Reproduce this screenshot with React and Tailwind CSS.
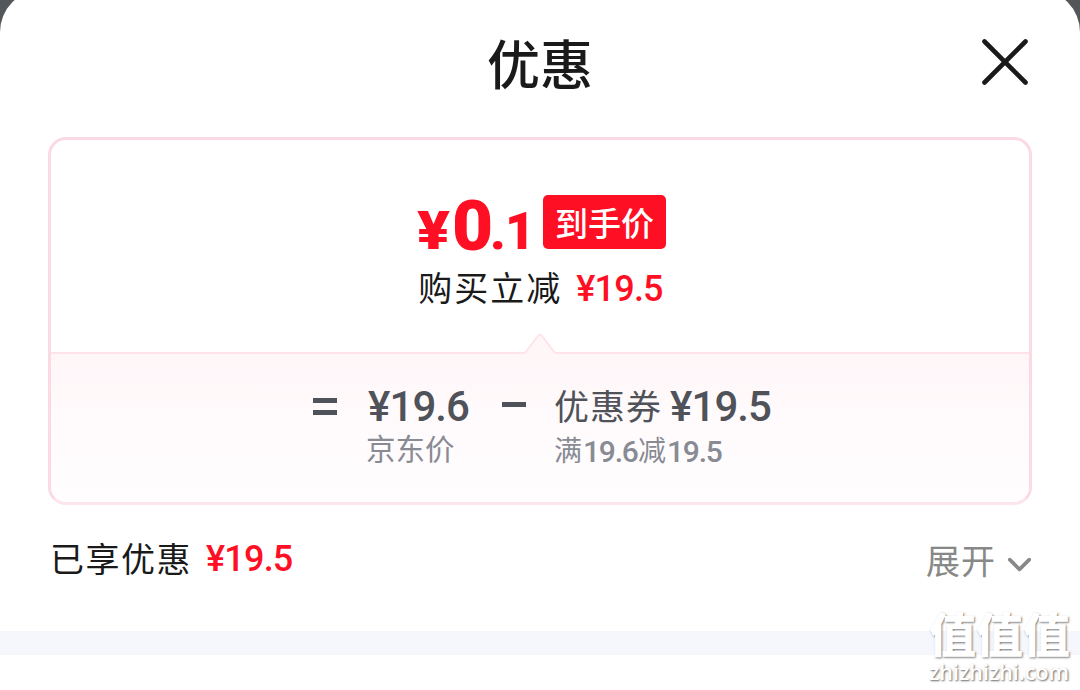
import { X, ChevronDown } from "lucide-react";

function Cn({ className, children }) {
  return <span className={`block whitespace-nowrap font-['Noto_Sans_CJK_SC',sans-serif] ${className}`}>{children}</span>
}

function Num({ className, children }) {
  return <span className={`block whitespace-nowrap font-['Roboto',sans-serif] ${className}`}>{children}</span>
}

function Header() {
  return (
    <header className="relative h-[137px] flex justify-center">
      <h1 className="mt-[22px] h-20">
        <Cn className="text-[53px] leading-[80px] font-medium text-[#1a1a1a]">优惠</Cn>
      </h1>
      <button className="absolute top-[21px] right-[34px] cursor-pointer" type="button">
        <X size={82} strokeWidth={1.35} className="text-[#1a1a1a]"/>
      </button>
    </header>
  )
}

function FinalPrice() {
  return (
    <div className="h-[212px] flex flex-col items-center">

      <div className="mt-[55px] ml-[3px] h-[54px] flex text-[#ff0f23]">
        <Num className="w-[35px] text-[53px] leading-[73px] font-black"><span className="inline-block origin-left scale-x-[1.15]">¥</span></Num>
        <Num className="w-[38px] text-[71px] leading-[62px] font-black">0</Num>
        <div className="w-[53px] flex">
          <Num className="w-[15px] text-[52px] leading-[74px] font-black">.</Num>
          <Num className="text-[52px] leading-[74px] font-black">1</Num>
        </div>
        <div className="w-[123px] h-[54px] rounded-[5px] bg-[#ff0f23] flex justify-center">
          <Cn className="text-[33px] leading-[54px] font-medium text-white">到手价</Cn>
        </div>
      </div>

      <div className="mt-[15px] ml-[2px] flex">
        <Cn className="-ml-px w-[158px] text-[34px] leading-[45px] tracking-[2px] text-[#1a1a1a]">购买立减</Cn>
        <Num className="text-[36px] leading-[50px] font-medium tracking-[-0.8px] text-[#ff0f23]">¥19.5</Num>
      </div>
    </div>
  )
}

function Formula() {
  return (
    <div className="relative flex-1 border-t-2 border-[#fee4ea] bg-linear-to-b from-[#fff6f8] via-[#fffbfc] via-50% to-[#fffdfe] rounded-b-[15px]">
      <svg className="absolute left-1/2 -top-[22px] -ml-[16px]" width="32" height="23" viewBox="0 0 32 23" fill="none">
        <path d="M1 21 L14 4 Q16 1 18 4 L31 21 V23 H1 Z" fill="#fff6f8"/>
        <path d="M1 21 L14 4 Q16 1 18 4 L31 21" stroke="#fee4ea" strokeWidth="2"/>
      </svg>

      <div className="flex pt-[28px] pl-[262px] text-[#505259]">
        <div className="w-[55px] pt-[16px] flex flex-col gap-[7px]">
          <div className="w-[24px] h-[5px] bg-[#505259]"></div>
          <div className="w-[24px] h-[5px] bg-[#505259]"></div>
        </div>

        <div className="w-[134px]">
          <Num className="text-[42px] leading-[50px] font-medium tracking-[-0.9px]">¥19.6</Num>
          <Cn className="-ml-[2px] text-[29.5px] leading-[30px] text-[#888b94]">京东价</Cn>
        </div>

        <div className="w-[53px] pt-[20px]">
          <div className="w-[24px] h-[5px] bg-[#505259]"></div>
        </div>

        <div className="-ml-px">
          <div className="flex">
            <Cn className="w-[116px] text-[35px] leading-[46px] tracking-[1px]">优惠券</Cn>
            <Num className="text-[42px] leading-[50px] font-medium tracking-[-0.9px]">¥19.5</Num>
          </div>
          <div className="flex text-[#888b94]">
            <Cn className="w-[29px] text-[28px] leading-[35px]">满</Cn>
            <Num className="w-[55px] text-[30px] leading-[39px] font-medium tracking-[-1.2px]">19.6</Num>
            <Cn className="w-[29px] text-[28px] leading-[35px]">减</Cn>
            <Num className="text-[30px] leading-[39px] font-medium tracking-[-1.2px]">19.5</Num>
          </div>
        </div>
      </div>
    </div>
  )
}

function Watermark() {
  return (
    <div className="absolute left-[929px] top-[604px] w-[151px] text-white">
      <Cn className="text-[47px] leading-[56px] font-black [text-shadow:1px_1px_2px_rgba(0,0,0,0.5)]">值值值</Cn>
      <span className="block whitespace-nowrap font-['Open_Sans',sans-serif] text-[21.5px] leading-[24px] font-semibold [text-shadow:1px_1px_2px_rgba(0,0,0,0.6)]">zhizhizhi.com</span>
    </div>
  )
}

function App() {
  return (
    <div className="relative w-[1080px] h-[690px] overflow-hidden bg-[#54575a]">
      <div className="h-[700px] -mt-[10px] pt-[10px] bg-white rounded-t-[42px]">

        <Header/>

        <section className="mx-[48px] h-[368px] border-[3px] border-[#fbdae3] border-b-[#fce5ec] rounded-[18px] flex flex-col">
          <FinalPrice/>
          <Formula/>
        </section>

        <div className="h-[126px] pl-[50px] pr-[41px] pt-[29px] flex">
          <Cn className="w-[156px] text-[34px] leading-[48px] tracking-[1.5px] text-[#1a1a1a]">已享优惠</Cn>
          <Num className="text-[36px] leading-[50px] font-medium tracking-[-0.8px] text-[#ff0f23]">¥19.5</Num>
          <button className="ml-auto h-[54px] flex items-center text-[#888]" type="button">
            <Cn className="-mt-[2px] w-[78px] text-[34px] leading-[52px] tracking-[1px]">展开</Cn>
            <ChevronDown size={39} strokeWidth={2.2} className="mt-[6px]"/>
          </button>
        </div>

        <div className="h-6 bg-[#f6f7fc]"></div>
      </div>

      <Watermark/>
    </div>
  )
}

export default App
